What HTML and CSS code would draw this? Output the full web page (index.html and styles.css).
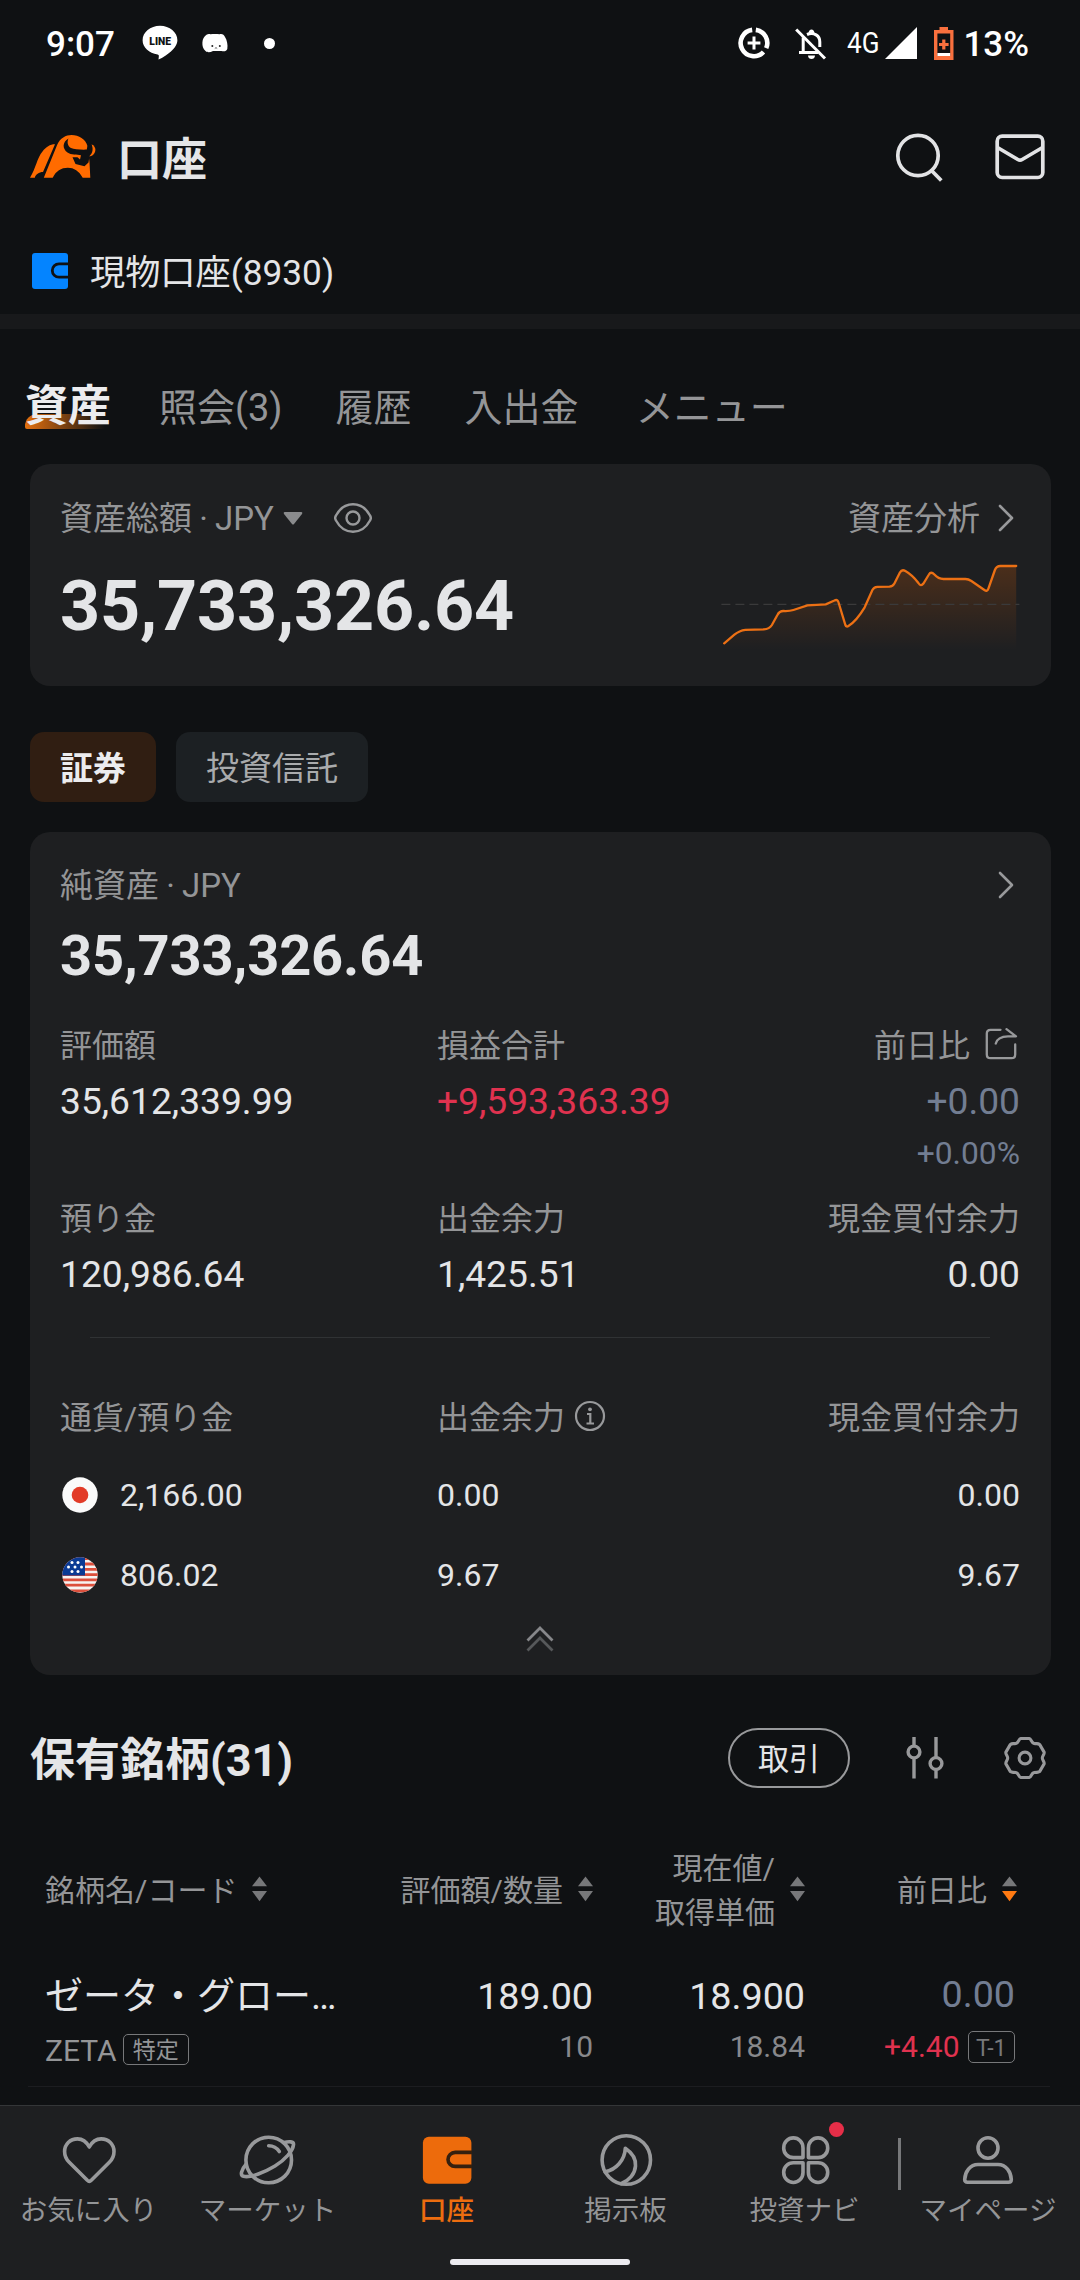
FILE: index.html
```html
<!DOCTYPE html>
<html lang="ja">
<head>
<meta charset="utf-8">
<title>口座</title>
<link rel="stylesheet" href="styles.css">
</head>
<body>
<svg class="defs" width="0" height="0" aria-hidden="true">
  <symbol id="chevron" viewBox="0 0 16 28"><path d="M2 2L14 14L2 26" fill="none" stroke="#98999b" stroke-width="2.6" stroke-linecap="round" stroke-linejoin="round"/></symbol>
  <symbol id="sort" viewBox="0 0 15 26"><path d="M7.5 .5L15 10.3H0Z" fill="#77787a"/><path class="down" d="M0 15H15L7.5 25.3Z"/></symbol>
</svg>
<div class="app">
  <div class="status">
    <span class="time">9:07</span>
    <svg class="line-icon" width="36" height="36" viewBox="0 0 36 36"><path d="M18 .8C8.3 .8 .6 7.300.6 15.300C.6 22.500 7 28.300 15.600 29.500C17.200 29.800 17 31 16.500 34.500C19.500 33.500 35.400 25 35.400 15.300C35.400 7.300 27.700.8 18 .8Z" fill="#fff"/><text x="18.200" y="19.800" text-anchor="middle" class="line-text">LINE</text></svg>
    <svg class="pet-icon" width="26" height="20" viewBox="0 0 26 20"><path d="M4.500 1.800C6 .6 7.500 .8 8.500 1.300C11 .8 15 .8 17.500 1.300C20 .6 22 1.500 23 4C25 7 26 12 25.300 16C24.500 18.300 22 18.800 19.500 18H11C8 19.600 5 19.600 3.500 18C1 16 .2 13 .4 9.500C.6 6 2 3.500 4.500 1.800Z" fill="#fff"/><circle cx="10.300" cy="13" r="1" fill="#222"/><circle cx="17.800" cy="13" r="1" fill="#222"/><path d="M12.800 15.500L14 14.600L15.200 15.500" stroke="#555" stroke-width=".9" fill="none"/></svg>
    <span class="more-dot"></span>
    <div class="status-right">
      <svg width="32" height="32" viewBox="0 0 32 32"><g fill="none" stroke="#fff"><path d="M17.800 2.900A13.200 13.200 0 0 1 28.200 21.200M25.500 25A13.200 13.200 0 1 1 14.200 2.900" stroke-width="4.600"/><path d="M16 9.600V22.400M9.600 16H22.400" stroke-width="3"/></g></svg>
      <svg class="bell" width="32" height="32" viewBox="0 0 32 32"><g fill="none" stroke="#fff" stroke-width="3"><path d="M1.200 1.500L30 30.500"/><path d="M8.200 9.500V24M4 24.500H23"/><path d="M12 6.500C19 3.500 25 8 24.800 14V19"/></g><path d="M13.500 5.500C13.500 0 19.500 0 19.500 5.500ZM13 27.500H20C20 32.300 13 32.300 13 27.500Z" fill="#fff"/></svg>
      <span class="network">4G</span>
      <svg class="signal" width="32" height="32" viewBox="0 0 32 32"><path d="M32 0V32H0Z" fill="#fff"/></svg>
      <svg class="battery" width="20" height="33" viewBox="0 0 20 33"><path d="M5.500 0H14V3H19.500V33H0V3H5.500Z" fill="#f9703e"/><path d="M3.400 6.500H16.200V29H3.400Z" fill="#0f1113"/><path d="M3.400 26H16.200V29H3.400Z" fill="#fff"/><path d="M9.800 12.500V22.500M5 17.500H14.600" stroke="#f9703e" stroke-width="3.200"/></svg>
      <span class="percent">13%</span>
    </div>
  </div>

  <header class="header">
    <svg width="66" height="44" viewBox="0 0 66 44">
      <g fill="#ff6b00"><path d="M0 42.700C6 33 7 23 12.500 16.500C16 12 20 9.300 25 9.300L13 37C9 37 5.500 39.500 4.800 42.700Z"/><path d="M13.800 42.700L27 10.300C30 3 36 0 41.500 0C49 0 55.500 4 57.500 11L59.500 27L60.300 42.700H52.700C49 36 44 32.700 37.900 32.700C31 32.700 26 36 22.700 42.700Z"/><path d="M61.500 9.300C64 10.500 65.600 13 65.400 15C65 19 62 21.300 59 21.500Z"/></g>
      <g fill="#0f1113"><path d="M38.500 3.500C32.500 7 32 13.500 37.500 17.500C41 20 47 19.500 51 20.200L50 24.500L47.500 22.300H42.500L45.500 29L54.500 31.200L58.500 27.500L59.500 21C63 18 63.500 13 61.300 9C57.500 8 57.500 12 56.800 14.600C50 14.800 44 14.300 41 13C37.500 11 36.800 7 38.500 3.500Z"/></g>
    </svg>
    <h1>口座</h1>
    <div class="header-actions">
      <svg width="50" height="50" viewBox="0 0 50 50"><g fill="none" stroke="#e2e3e5" stroke-width="3.700"><circle cx="24" cy="23.500" r="20.200"/><path d="M37.500 38.500L47.300 48.500"/></g></svg>
      <svg width="50" height="46" viewBox="0 0 50 46"><g fill="none" stroke="#e2e3e5" stroke-width="3.700"><rect x="2.200" y="2.200" width="45.600" height="41.300" rx="5"/><path d="M2.500 13.500L22.800 25.500Q25 26.800 27.200 25.500L47.500 13.500"/></g></svg>
    </div>
  </header>

  <div class="account">
    <svg width="36" height="36" viewBox="0 0 36 36"><rect width="36" height="36" rx="3" fill="#0484ff"/><path d="M36 10.800H27a6.700 6.700 0 0 0 0 13.400H36" fill="none" stroke="#0f1113" stroke-width="2.800"/></svg>
    <span>現物口座(8930)</span>
  </div>
  <div class="band"></div>

  <nav class="tabs">
    <span class="tab active">資産</span>
    <span class="tab">照会(3)</span>
    <span class="tab">履歴</span>
    <span class="tab">入出金</span>
    <span class="tab menu">メニュー</span>
  </nav>

  <section class="card total">
    <div class="card-head">
      <span>資産総額 · JPY</span>
      <svg class="caret" width="20" height="13" viewBox="0 0 20 13"><path d="M1.500 0H18.500Q20 .4 19 2L11 12Q10 13 9 12L1 2Q0 .4 1.500 0Z" fill="#8a8b8d"/></svg>
      <svg class="eye" width="38" height="30" viewBox="0 0 38 30"><g fill="none" stroke="#98999b" stroke-width="2.400"><path d="M2 12.500C6 5 12.500 1.300 19 1.300S32 5 36 12.500Q37.600 15 36 17.500C32 25 25.500 28.700 19 28.700S6 25 2 17.500Q.4 15 2 12.500Z"/><circle cx="19" cy="15" r="6.500"/></g></svg>
      <span class="analysis">資産分析</span>
      <svg class="chev" width="16" height="28"><use href="#chevron"/></svg>
    </div>
    <div class="total-body">
      <strong class="total-value">35,733,326.64</strong>
      <svg width="300" height="100" viewBox="0.600 0 300 100">
        <defs><linearGradient id="area" x1="0" y1="0" x2="0" y2="1"><stop offset="0" stop-color="#ff6b00" stop-opacity=".2"/><stop offset="1" stop-color="#ff6b00" stop-opacity="0"/></linearGradient></defs>
        <path d="M4.800 83.300L15 74.700Q20 70.500 26 69.800L44.400 69.300Q50 69 52.500 65L58 55Q60 51 64 51Q70 51.300 74 50L88 45.300L106.400 44.300L115 40.500Q118 39 119 42L126 65Q127 67.500 129 66Q137 61 145.300 47.300L153 30Q154.500 27 158 26.800L170 26.700Q173.500 26.500 175 23.500L180.500 12.500Q182.500 9 186 11Q193 15 199 23Q201.500 27 204 23.500L209.500 14.500Q211.500 11 215 14.500Q219 19 224 19L246 19Q249 19 252 21L265 30Q268 32 269 28.500L275.500 10Q277 6 281 6H296.800V90H4.800Z" fill="url(#area)"/>
        <path d="M2 44.300H300" stroke="#3a3a3b" stroke-width="1.300" stroke-dasharray="9 5"/>
        <path d="M4.800 83.300L15 74.700Q20 70.500 26 69.800L44.400 69.300Q50 69 52.500 65L58 55Q60 51 64 51Q70 51.300 74 50L88 45.300L106.400 44.300L115 40.500Q118 39 119 42L126 65Q127 67.500 129 66Q137 61 145.300 47.300L153 30Q154.500 27 158 26.800L170 26.700Q173.500 26.500 175 23.500L180.500 12.500Q182.500 9 186 11Q193 15 199 23Q201.500 27 204 23.500L209.500 14.500Q211.500 11 215 14.500Q219 19 224 19L246 19Q249 19 252 21L265 30Q268 32 269 28.500L275.500 10Q277 6 281 6H296.800" fill="none" stroke="#ec7014" stroke-width="2.300" stroke-linecap="round"/>
      </svg>
    </div>
  </section>

  <div class="chips">
    <span class="chip on">証券</span>
    <span class="chip">投資信託</span>
  </div>

  <section class="card net">
    <div class="card-head">
      <span>純資産 · JPY</span>
      <svg class="chev push" width="16" height="28"><use href="#chevron"/></svg>
    </div>
    <strong class="net-value">35,733,326.64</strong>
    <div class="stats first">
      <div><div class="label">評価額</div><div class="value">35,612,339.99</div></div>
      <div><div class="label">損益合計</div><div class="value up">+9,593,363.39</div></div>
      <div class="end">
        <div class="label with-icon">前日比
          <svg width="34" height="32" viewBox="0 0 34 32"><g fill="none" stroke="#98999b" stroke-width="2.300" stroke-linecap="round" stroke-linejoin="round"><path d="M15.500 1.800H5.500Q1.800 1.800 1.800 5.500V26.500Q1.800 30.200 5.500 30.200H26.500Q30.200 30.200 30.200 26.500V16.500"/><path d="M21.500 1.200L31 8.300H23Q12.500 8.500 10.800 15.500"/></g></svg>
        </div>
        <div class="value flat">+0.00</div>
        <div class="pct flat">+0.00%</div>
      </div>
    </div>
    <div class="stats second">
      <div><div class="label">預り金</div><div class="value">120,986.64</div></div>
      <div><div class="label">出金余力</div><div class="value">1,425.51</div></div>
      <div class="end"><div class="label">現金買付余力</div><div class="value">0.00</div></div>
    </div>
    <hr class="rule">
    <div class="stats currency-head label">
      <div>通貨/預り金</div>
      <div class="info">出金余力
        <svg width="32" height="32" viewBox="0 0 32 32"><g fill="none" stroke="#98999b"><circle cx="16" cy="16" r="14" stroke-width="2.200"/><path d="M13 14H16.300V23.500M12.500 23.500H20" stroke-width="2.200"/></g><circle cx="16" cy="9.300" r="1.900" fill="#98999b"/></svg>
      </div>
      <div class="end">現金買付余力</div>
    </div>
    <div class="stats currency">
      <div class="money">
        <svg width="36" height="36" viewBox="0 0 36 36"><circle cx="18" cy="18" r="17.700" fill="#fafafa"/><circle cx="18" cy="18" r="8.300" fill="#e23b28"/></svg>
        <span>2,166.00</span>
      </div>
      <div>0.00</div>
      <div class="end">0.00</div>
    </div>
    <div class="stats currency">
      <div class="money">
        <svg width="36" height="36" viewBox="0 0 36 36"><defs><clipPath id="round"><circle cx="18" cy="18" r="17.700"/></clipPath></defs><g clip-path="url(#round)"><path d="M0 0H36V36H0Z" fill="#f7f3f2"/><path d="M0 1.700H36M0 7H36M0 12.300H36M0 17.600H36M0 22.900H36M0 28.200H36M0 34H36" stroke="#dc4f3c" stroke-width="2.800"/><path d="M0 0H23V18.500H0Z" fill="#0a3a94"/><g fill="#fff"><circle cx="10" cy="5.500" r="1.500"/><circle cx="16" cy="5.500" r="1.500"/><circle cx="6.500" cy="10" r="1.500"/><circle cx="13" cy="10" r="1.500"/><circle cx="19.500" cy="10" r="1.500"/><circle cx="10" cy="14.600" r="1.500"/><circle cx="16" cy="14.600" r="1.500"/></g></g></svg>
        <span>806.02</span>
      </div>
      <div>9.67</div>
      <div class="end">9.67</div>
    </div>
    <div class="collapse"><svg width="28" height="26" viewBox="0 0 28 26"><g fill="none" stroke-width="2.800"><path d="M1.500 14.500L14 2L26.500 14.500" stroke="#86878a"/><path d="M1.500 24.500L14 12L26.500 24.500" stroke="#56585a"/></g></svg></div>
  </section>

  <div class="holdings-head">
    <h2>保有銘柄(31)</h2>
    <span class="trade">取引</span>
    <svg class="sliders" width="44" height="44" viewBox="0 0 44 44"><g fill="none" stroke="#98999b" stroke-width="3.400"><path d="M11 1V9.500M11 22V42.500M33 1V21M33 33.500V42.500"/><circle cx="11" cy="16" r="5.900"/><circle cx="33" cy="27.500" r="5.900"/></g></svg>
    <svg class="gear" width="44" height="44" viewBox="0 0 44 44"><g fill="none" stroke="#98999b" stroke-width="3.100" stroke-linejoin="round"><path d="M17.500 2.500H26.500C28 2.500 28.500 7 31 7.400C34 8 35 7.200 36.600 8.400L41.100 16.100C41.800 18 39.300 20 39.300 22C39.300 24 41.800 26 41.100 27.900L36.600 35.600C35 36.800 34 36 31 36.600C28.500 37 28 41.500 26.500 41.500H17.500C16 41.500 15.500 37 13 36.600C10 36 9 36.800 7.400 35.600L2.900 27.900C2.200 26 4.700 24 4.700 22C4.700 20 2.200 18 2.900 16.100L7.400 8.400C9 7.200 10 8 13 7.400C15.500 7 16 2.500 17.500 2.500Z"/><circle cx="22" cy="22" r="5.900"/></g></svg>
  </div>

  <div class="table-head grid">
    <div class="th">銘柄名/コード<svg class="sort" width="15" height="26"><use href="#sort"/></svg></div>
    <div class="th right">評価額/数量<svg class="sort" width="15" height="26"><use href="#sort"/></svg></div>
    <div class="th right"><span>現在値/<br>取得単価</span><svg class="sort" width="15" height="26"><use href="#sort"/></svg></div>
    <div class="th right">前日比<svg class="sort desc" width="15" height="26"><use href="#sort"/></svg></div>
  </div>

  <div class="holding grid">
    <div class="name-cell">
      <div class="main">ゼータ・グロー…</div>
      <div class="sub">ZETA<span class="tag">特定</span></div>
    </div>
    <div class="num-cell"><div class="main">189.00</div><div class="sub">10</div></div>
    <div class="num-cell"><div class="main">18.900</div><div class="sub">18.84</div></div>
    <div class="num-cell change"><div class="main flat">0.00</div><div class="sub"><span class="up">+4.40</span><span class="tag">T-1</span></div></div>
  </div>
  <hr class="row-rule">

  <footer class="bottom">
    <div class="nav">
      <div class="item"><svg width="60" height="60" viewBox="0 0 60 60"><path d="M30.300 17C27 11 22 8.900 18.500 8.900C11 8.900 5.600 14.500 5.600 21.500C5.600 26 7.500 29.500 10 32L28.300 50.300Q30.300 52.200 32.300 50.300L50.600 32C53.100 29.500 55 26 55 21.500C55 14.500 49.600 8.900 42.100 8.900C38.600 8.900 33.600 11 30.300 17Z"/></svg>お気に入り</div>
      <div class="item"><svg width="60" height="60" viewBox="0 0 60 60"><circle cx="30.700" cy="30" r="22.800"/><path d="M8.300 34C3 40 2 45.500 5.500 46.300C13 48 27 42 37 36C47 30 55 21 55.500 14.500C55.800 11.300 51 11.300 46 12.500"/><path d="M30.700 15.700C35.500 15.700 39 18 41.300 21.500"/></svg>マーケット</div>
      <div class="item active"><svg width="60" height="60" viewBox="0 0 60 60"><rect class="wallet" x="5.900" y="6.700" width="48.500" height="47" rx="6"/><path class="slot" d="M55 22.400H38.200a7.200 7 0 0 0 0 14H55"/></svg>口座</div>
      <div class="item"><svg width="60" height="60" viewBox="0 0 60 60"><ellipse cx="30.300" cy="30" rx="24.200" ry="24.300"/><path d="M9 41.800C20 40 28.800 30 29.300 18.300C37 23.500 40 30 39.500 36C39 44 33 50.500 25.500 53.500"/></svg>掲示板</div>
      <div class="item"><svg width="60" height="60" viewBox="0 0 60 60"><path d="M28 27.600V17.900A9.650 10 0 0 0 8.700 17.900V18.300A9.600 9.300 0 0 0 18.300 27.600Z"/><path d="M28 27.600V17.900A9.650 10 0 0 0 8.700 17.900V18.300A9.600 9.300 0 0 0 18.300 27.600Z" transform="translate(61.400 0) scale(-1 1)"/><path d="M28 27.600V17.900A9.650 10 0 0 0 8.700 17.900V18.300A9.600 9.300 0 0 0 18.300 27.600Z" transform="translate(0 60.400) scale(1 -1)"/><path d="M28 27.600V17.900A9.650 10 0 0 0 8.700 17.900V18.300A9.600 9.300 0 0 0 18.300 27.600Z" transform="translate(61.400 60.400) scale(-1 -1)"/></svg>投資ナビ<i class="badge"></i></div>
      <i class="separator"></i>
      <div class="item"><svg width="60" height="60" viewBox="0 0 60 60"><ellipse cx="30" cy="18" rx="10" ry="10.300"/><path d="M20 34.500H40C48 34.500 53 42 53.300 49.500Q53.300 52.200 50.500 52.200H9.500Q6.700 52.200 6.700 49.500C7 42 12 34.500 20 34.500Z"/></svg>マイページ</div>
    </div>
    <div class="home-bar"></div>
  </footer>
</div>
</body>
</html>
```
FILE: styles.css
```css
* { box-sizing: border-box; }
body {
  margin: 0;
  background: #0f1113;
  color: #e4e5e7;
  font-family: Roboto, "Noto Sans CJK JP", sans-serif;
}
svg { display: block; flex: none; }
.defs { position: absolute; }
.app {
  width: 1080px;
  height: 2280px;
  display: flex;
  flex-direction: column;
  overflow: hidden;
}

/* status bar */
.status {
  height: 86px;
  display: flex;
  align-items: center;
  padding: 0 51px 0 46px;
  color: #fff;
}
.time, .percent { font-size: 35px; font-weight: 500; line-height: 40px; padding-top: 4px; }
.line-icon { margin-left: 27px; }
.line-text { font-size: 10.300px; font-weight: 900; fill: #0f1113; }
.pet-icon { margin-left: 24px; }
.more-dot { width: 11px; height: 11px; border-radius: 50%; background: #fff; margin-left: 36px; }
.status-right { margin-left: auto; display: flex; align-items: center; }
.bell { margin: 2px 20px 0 25px; }
.network { width: 32px; font-size: 30px; line-height: 40px; transform: scaleX(.87); transform-origin: 0 50%; white-space: nowrap; }
.signal { margin-left: 6px; }
.battery { margin: 1px 9px 0 17px; }

/* header */
.header { height: 142px; display: flex; align-items: center; padding: 0 35px 0 30px; }
.header h1 { margin: 0 0 0 21px; padding-top: 7px; font-size: 45px; line-height: 60px; font-weight: 700; }
.header-actions { margin-left: auto; display: flex; align-items: center; gap: 51px; }

.account { height: 86px; display: flex; align-items: center; gap: 22px; padding-left: 32px; font-size: 35.200px; line-height: 50px; }
.account span { padding-top: 3px; }
.band { height: 15px; background: #18191b; }

/* tabs */
.tabs { height: 135px; display: flex; padding: 53px 0 0 25px; gap: 53px; font-size: 38px; line-height: 52px; color: #949597; }
.tab.active { position: relative; z-index: 0; margin: -2px -5px 0 0; font-size: 43px; font-weight: 700; color: #ececee; }
.tab.active::before {
  content: "";
  position: absolute;
  z-index: -1;
  left: 0;
  top: 34px;
  width: 80px;
  height: 15px;
  border-radius: 12px 0 0 2px;
  background: linear-gradient(90deg, #e2700f, rgba(226, 112, 15, 0));
}
.menu { margin-left: 4px; }

/* cards */
.card { margin: 0 29.500px; padding: 30px 30.500px 0; border-radius: 20px; background: #1e1f21; }
.card-head { height: 48px; display: flex; align-items: center; font-size: 33px; line-height: 48px; word-spacing: -1px; color: #949597; }
.total { height: 222px; padding-top: 31px; }
.caret { margin: -1px 0 0 9px; }
.eye { margin: -2px 0 0 31px; }
.analysis { margin-left: auto; }
.chev { margin: 0 6px 3px 18px; }
.push { margin-left: auto; }
.total-body { margin-top: 17px; display: flex; justify-content: space-between; align-items: flex-start; }
.total-value { font-size: 70px; line-height: 92px; letter-spacing: -.18px; }

.chips { display: flex; gap: 20px; margin: 46px 30px 30px; }
.chip { height: 70px; padding: 0 30px; border-radius: 14px; background: #1c2023; color: #a9abad; font-size: 33px; line-height: 73px; }
.chip.on { background: #301e12; color: #ececee; font-weight: 700; }

.net { height: 843px; }
.net-value { display: block; font-size: 56px; line-height: 92px; letter-spacing: -.15px; }
.stats { display: grid; grid-template-columns: 377px 1fr 300px; }
.first { margin-top: 22px; height: 173px; }
.second { height: 103px; }
.label { font-size: 32px; line-height: 44px; color: #949597; }
.with-icon { display: flex; align-items: center; justify-content: flex-end; gap: 15px; }
.with-icon svg { margin: -5px 1px 0 0; }
.value { margin-top: 6px; font-size: 37.200px; line-height: 54px; }
.pct { margin-top: 1px; font-size: 31.800px; line-height: 48px; }
.end { text-align: right; }
.up { color: #e0324f; }
.flat { color: #727d92; }
.rule { width: 900px; height: 1px; border: 0; margin: 37px 0 58px 29.500px; background: #303234; }
.currency-head { margin-bottom: 15px; }
.info { display: flex; align-items: center; gap: 9px; }
.info svg { margin-top: -5px; }
.currency { height: 80px; font-size: 32px; line-height: 80px; }
.money { display: flex; align-items: center; gap: 22px; padding-left: 2px; }
.collapse { height: 47px; display: flex; align-items: center; justify-content: center; }

/* holdings */
.holdings-head { height: 60px; margin-top: 53px; padding: 0 33px 0 30px; display: flex; align-items: center; }
.holdings-head h2 { margin: 0; font-size: 45px; line-height: 65px; font-weight: 700; padding-top: 4px; }
.trade { margin-left: auto; width: 122px; height: 60px; border: 2px solid #98999b; border-radius: 30px; text-align: center; font-size: 31px; line-height: 59px; }
.sliders { margin-left: 53px; }
.gear { margin-left: 56px; }

.grid { display: grid; grid-template-columns: 336px 212px 212px 212px; padding: 0 63px 0 45px; }
.table-head { margin-top: 59px; height: 88px; align-items: center; font-size: 30px; line-height: 44px; color: #949597; }
.th { display: flex; align-items: center; gap: 15px; }
.right { justify-content: flex-end; text-align: right; }
.sort { margin-top: -4px; fill: #77787a; }
.desc { fill: #ff7a12; }

.holding { height: 151px; padding-top: 36px; }
.main { font-size: 38px; line-height: 50px; white-space: nowrap; }
.num-cell .main { font-size: 37.700px; }
.sub { font-size: 30px; line-height: 40px; color: #87888b; }
.name-cell .sub { margin-top: 10px; display: flex; align-items: center; color: #949597; }
.num-cell { text-align: right; }
.num-cell .sub { margin-top: 6px; }
.change { margin-top: -2px; padding-right: 2px; }
.num-cell.change .sub { margin-top: 8px; display: flex; align-items: center; justify-content: flex-end; }
.tag { height: 31px; margin: -3px 0 0 6px; padding: 0 9px; border: 1px solid #77787a; border-radius: 5px; font-size: 23px; line-height: 32px; color: #949597; }
.change .tag { height: 32px; margin: 0 0 0 8px; padding: 0 7.500px; line-height: 33px; color: #77787a; }
.row-rule { width: 1022px; height: 1px; margin: 0 0 18px 28px; border: 0; background: #1c1d20; }

/* bottom navigation */
.bottom { height: 175px; border-top: 1px solid #343638; background: #1e1f21; }
.nav { display: grid; grid-template-columns: repeat(5, 179px) 3px 182px; padding-top: 24px; margin-left: -1px; }
.item { position: relative; display: flex; flex-direction: column; align-items: center; font-size: 27.500px; line-height: 41px; color: #949597; white-space: nowrap; }
.item svg { fill: none; stroke: #98999b; stroke-width: 3.600px; stroke-linecap: round; stroke-linejoin: round; }
.item.active { color: #ed6d0f; font-weight: 500; }
.item .wallet { fill: #ed6b0c; stroke: none; }
.item .slot { stroke: #35200f; stroke-linecap: butt; }
.badge { position: absolute; left: 114px; top: -8px; width: 15px; height: 15px; border-radius: 50%; background: #e62e48; }
.separator { width: 3px; height: 52px; margin: 8px 0 0 4px; background: #77787a; }
.home-bar { width: 180px; height: 6px; margin: 28px auto 0; border-radius: 3px; background: #ecebf0; }
```
